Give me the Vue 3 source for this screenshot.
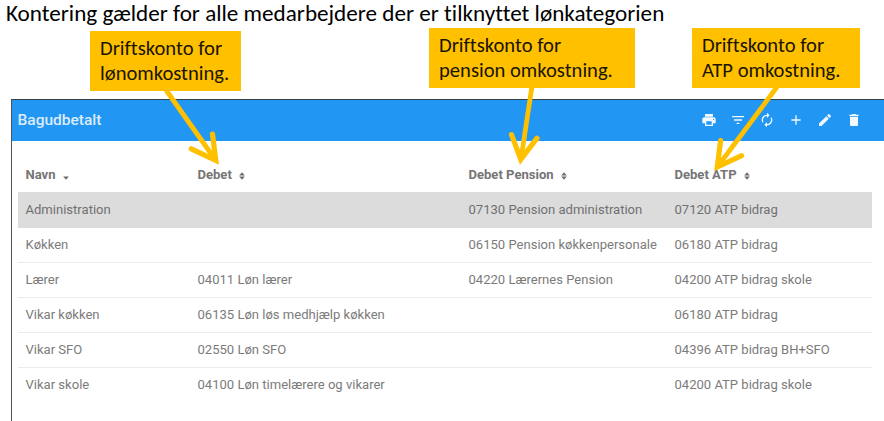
<script setup>
import { ref } from 'vue'

const columns = [
  { key: 'navn', label: 'Navn', sorted: true },
  { key: 'debet', label: 'Debet' },
  { key: 'pension', label: 'Debet Pension' },
  { key: 'atp', label: 'Debet ATP' },
]

const rows = [
  { navn: 'Administration', debet: '', pension: '07130 Pension administration', atp: '07120 ATP bidrag' },
  { navn: 'Køkken', debet: '', pension: '06150 Pension køkkenpersonale', atp: '06180 ATP bidrag' },
  { navn: 'Lærer', debet: '04011 Løn lærer', pension: '04220 Lærernes Pension', atp: '04200 ATP bidrag skole' },
  { navn: 'Vikar køkken', debet: '06135 Løn løs medhjælp køkken', pension: '', atp: '06180 ATP bidrag' },
  { navn: 'Vikar SFO', debet: '02550 Løn SFO', pension: '', atp: '04396 ATP bidrag BH+SFO' },
  { navn: 'Vikar skole', debet: '04100 Løn timelærere og vikarer', pension: '', atp: '04200 ATP bidrag skole' },
]

const actions = [
  { name: 'Udskriv', d: 'M19 8H5c-1.66 0-3 1.34-3 3v6h4v4h12v-4h4v-6c0-1.66-1.34-3-3-3zm-3 11H8v-5h8v5zm3-7c-.55 0-1-.45-1-1s.45-1 1-1 1 .45 1 1-.45 1-1 1zm-1-9H6v4h12V3z' },
  { name: 'Filter', d: 'M10 18h4v-2h-4v2zM3 6v2h18V6H3zm3 7h12v-2H6v2z' },
  { name: 'Opdater', d: 'M12 6v3l4-4-4-4v3c-4.42 0-8 3.58-8 8 0 1.57.46 3.03 1.24 4.26L6.7 14.8c-.45-.83-.7-1.79-.7-2.8 0-3.31 2.69-6 6-6zm6.76 1.74L17.3 9.2c.44.84.7 1.79.7 2.8 0 3.31-2.69 6-6 6v-3l-4 4 4 4v-3c4.42 0 8-3.58 8-8 0-1.57-.46-3.03-1.24-4.26z' },
  { name: 'Tilføj', d: 'M19 13h-6v6h-2v-6H5v-2h6V5h2v6h6v2z' },
  { name: 'Rediger', d: 'M3 17.25V21h3.75L17.81 9.94l-3.75-3.75L3 17.25zM20.71 7.04c.39-.39.39-1.02 0-1.41l-2.34-2.34c-.39-.39-1.02-.39-1.41 0l-1.83 1.83 3.75 3.75 1.83-1.83z' },
  { name: 'Slet', d: 'M6 19c0 1.1.9 2 2 2h8c1.1 0 2-.9 2-2V7H6v12zM19 4h-3.5l-1-1h-5l-1 1H5v2h14V4z' },
]

const selected = ref(0)
</script>

<template>
  <div class="slide">
    <h1 class="title">Kontering gælder for alle medarbejdere der er tilknyttet lønkategorien</h1>

    <section class="panel">
      <header class="toolbar">
        <span class="toolbar-title">Bagudbetalt</span>
        <div class="actions">
          <svg v-for="a in actions" :key="a.name" class="action" viewBox="0 0 24 24">
            <path :d="a.d" />
          </svg>
        </div>
      </header>

      <div class="table">
        <div class="row head">
          <div v-for="c in columns" :key="c.key" class="cell">
            <span>{{ c.label }}</span>
            <svg class="sort" viewBox="0 0 6 10">
              <path v-if="!c.sorted" d="M0.2 4.4 3 1.2l2.8 3.2z" />
              <path d="M0.2 5.6h5.6L3 8.8z" />
            </svg>
          </div>
        </div>
        <div
          v-for="(row, i) in rows"
          :key="row.navn"
          class="row"
          :class="{ selected: selected === i }"
          @click="selected = i"
        >
          <div v-for="c in columns" :key="c.key" class="cell">{{ row[c.key] }}</div>
        </div>
      </div>
    </section>

    <div class="note note-debet">Driftskonto for<br />lønomkostning.</div>
    <div class="note note-pension">Driftskonto for<br />pension omkostning.</div>
    <div class="note note-atp">Driftskonto for<br />ATP omkostning.</div>

    <!-- arrows from the notes to the column heads -->
    <svg class="arrows" viewBox="0 0 884 421">
      <path class="shaft" d="M166 90 215.5 160" />
      <path class="tip" d="M191.3 148.8 215.8 160.3 212.5 134.2" />
      <path class="shaft" d="M532 86 521 159" />
      <path class="tip" d="M511.5 134.6 520.8 159.4 537 138.2" />
      <path class="shaft" d="M777 87 717.3 167" />
      <path class="tip" d="M720.6 140.6 717.3 167 741.6 155.6" />
    </svg>
  </div>
</template>

<style>
body {
  margin: 0;
  background: #fff;
}
</style>

<style scoped>
.slide {
  position: relative;
  width: 884px;
  height: 421px;
  background: #fff;
  font-family: Roboto, sans-serif;
}

.title {
  margin: 0;
  height: 99px;
  padding-left: 6px;
  box-sizing: border-box;
  font: 400 23.15px/26px Carlito, Lato, sans-serif;
  font-variant-ligatures: none;
  color: #000;
  white-space: nowrap;
}

.panel {
  margin-left: 11px;
  height: 322px;
  box-sizing: border-box;
  border-top: 1px solid #33414c;
  border-left: 1px solid #505050;
}

.toolbar {
  display: flex;
  align-items: center;
  justify-content: space-between;
  height: 41px;
  padding: 0 22px 2px 5.5px;
  box-sizing: border-box;
  background: #2196f3;
}

.toolbar-title {
  font-size: 15.5px;
  font-weight: 500;
  color: #dcecfa;
}

.actions {
  display: flex;
  gap: 13px;
}

.action {
  width: 16px;
  height: 16px;
  fill: #f3f8fd;
}

.table {
  margin: 0 12px 0 6px;
}

.row {
  display: grid;
  grid-template-columns: 172px 271px 206px 1fr;
  align-items: center;
  height: 35px;
  padding: 0 0 1px 7.5px;
  box-sizing: border-box;
  border-bottom: 1px solid #ebebeb;
  font-size: 13.05px;
  color: #7b7b7b;
  white-space: nowrap;
}

.row:last-child {
  border-bottom-color: transparent;
}

.row.head {
  height: 51px;
  padding-top: 17px;
  border-bottom: none;
  font-weight: 700;
  color: #757575;
}

.row.selected {
  height: 36px;
  background: #dcdcdc;
  border-bottom-color: #dcdcdc;
  color: #707070;
}

.sort {
  width: 6px;
  height: 10px;
  margin-left: 7.5px;
  vertical-align: -1.5px;
  fill: #6b6b6b;
}

.note {
  position: absolute;
  height: 60px;
  padding: 4.5px 0 0 10px;
  box-sizing: border-box;
  background: #ffc000;
  font: 400 20.6px/25px Carlito, Lato, sans-serif;
  font-variant-ligatures: none;
  color: #1a1400;
  white-space: nowrap;
}

.note-debet {
  left: 90px;
  top: 31px;
  width: 151px;
}

.note-pension {
  left: 429px;
  top: 28px;
  width: 206px;
}

.note-atp {
  left: 692px;
  top: 28px;
  width: 168px;
}

.arrows {
  position: absolute;
  left: 0;
  top: 0;
  width: 884px;
  height: 421px;
  fill: none;
  stroke: #ffc000;
  stroke-width: 4.8;
  pointer-events: none;
}

.tip {
  stroke-width: 5.2;
  stroke-linecap: round;
  stroke-linejoin: miter;
}
</style>
